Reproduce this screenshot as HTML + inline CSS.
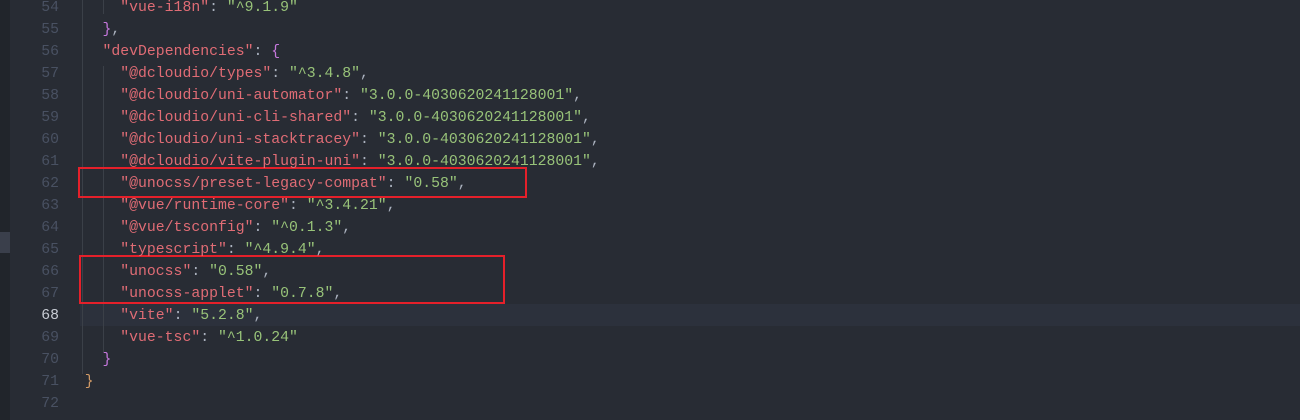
<!DOCTYPE html>
<html><head><meta charset="utf-8"><style>
html,body{margin:0;padding:0;width:1300px;height:420px;overflow:hidden;background:#282c34;}
.side{position:absolute;left:0;top:0;width:10px;height:420px;background:#21252b;}
.sidemark{position:absolute;left:0;top:232px;width:10px;height:21px;background:#3a3f4b;}
.hl{position:absolute;left:80px;top:304px;width:1220px;height:22px;background:#2c313c;}
.ln{position:absolute;left:20px;width:39px;text-align:right;font:14.8px/22px "Liberation Mono",monospace;color:#495162;}
.code{position:absolute;left:67px;font:14.8px/22px "Liberation Mono",monospace;color:#abb2bf;white-space:pre;}
.k{color:#e06c75}.s{color:#98c379}.b{color:#c678dd}.o{color:#d19a66}
.guide{position:absolute;width:1px;background:#3b4048;}
.box{position:absolute;border:2px solid #e5202a;box-sizing:border-box;}
</style></head><body>
<div class="side"></div><div class="sidemark"></div>
<div class="hl"></div>
<div class="guide" style="left:82px;top:0;height:374px"></div>
<div class="guide" style="left:103px;top:66px;height:286px"></div>
<div class="guide" style="left:103px;top:0;height:14px"></div>
<div class="box" style="left:78px;top:167px;width:449px;height:31px"></div>
<div class="box" style="left:79px;top:255px;width:426px;height:49px"></div>
<div class="ln" style="top:-3px">54</div><div class="code" style="top:-3px">      <span class="k">"vue-i18n"</span>: <span class="s">"^9.1.9"</span></div>
<div class="ln" style="top:19px">55</div><div class="code" style="top:19px">    <span class="b">}</span>,</div>
<div class="ln" style="top:41px">56</div><div class="code" style="top:41px">    <span class="k">"devDependencies"</span>: <span class="b">{</span></div>
<div class="ln" style="top:63px">57</div><div class="code" style="top:63px">      <span class="k">"@dcloudio/types"</span>: <span class="s">"^3.4.8"</span>,</div>
<div class="ln" style="top:85px">58</div><div class="code" style="top:85px">      <span class="k">"@dcloudio/uni-automator"</span>: <span class="s">"3.0.0-4030620241128001"</span>,</div>
<div class="ln" style="top:107px">59</div><div class="code" style="top:107px">      <span class="k">"@dcloudio/uni-cli-shared"</span>: <span class="s">"3.0.0-4030620241128001"</span>,</div>
<div class="ln" style="top:129px">60</div><div class="code" style="top:129px">      <span class="k">"@dcloudio/uni-stacktracey"</span>: <span class="s">"3.0.0-4030620241128001"</span>,</div>
<div class="ln" style="top:151px">61</div><div class="code" style="top:151px">      <span class="k">"@dcloudio/vite-plugin-uni"</span>: <span class="s">"3.0.0-4030620241128001"</span>,</div>
<div class="ln" style="top:173px">62</div><div class="code" style="top:173px">      <span class="k">"@unocss/preset-legacy-compat"</span>: <span class="s">"0.58"</span>,</div>
<div class="ln" style="top:195px">63</div><div class="code" style="top:195px">      <span class="k">"@vue/runtime-core"</span>: <span class="s">"^3.4.21"</span>,</div>
<div class="ln" style="top:217px">64</div><div class="code" style="top:217px">      <span class="k">"@vue/tsconfig"</span>: <span class="s">"^0.1.3"</span>,</div>
<div class="ln" style="top:239px">65</div><div class="code" style="top:239px">      <span class="k">"typescript"</span>: <span class="s">"^4.9.4"</span>,</div>
<div class="ln" style="top:261px">66</div><div class="code" style="top:261px">      <span class="k">"unocss"</span>: <span class="s">"0.58"</span>,</div>
<div class="ln" style="top:283px">67</div><div class="code" style="top:283px">      <span class="k">"unocss-applet"</span>: <span class="s">"0.7.8"</span>,</div>
<div class="ln" style="top:305px;color:#c8ccd4">68</div><div class="code" style="top:305px">      <span class="k">"vite"</span>: <span class="s">"5.2.8"</span>,</div>
<div class="ln" style="top:327px">69</div><div class="code" style="top:327px">      <span class="k">"vue-tsc"</span>: <span class="s">"^1.0.24"</span></div>
<div class="ln" style="top:349px">70</div><div class="code" style="top:349px">    <span class="b">}</span></div>
<div class="ln" style="top:371px">71</div><div class="code" style="top:371px">  <span class="o">}</span></div>
<div class="ln" style="top:393px">72</div>
</body></html>
